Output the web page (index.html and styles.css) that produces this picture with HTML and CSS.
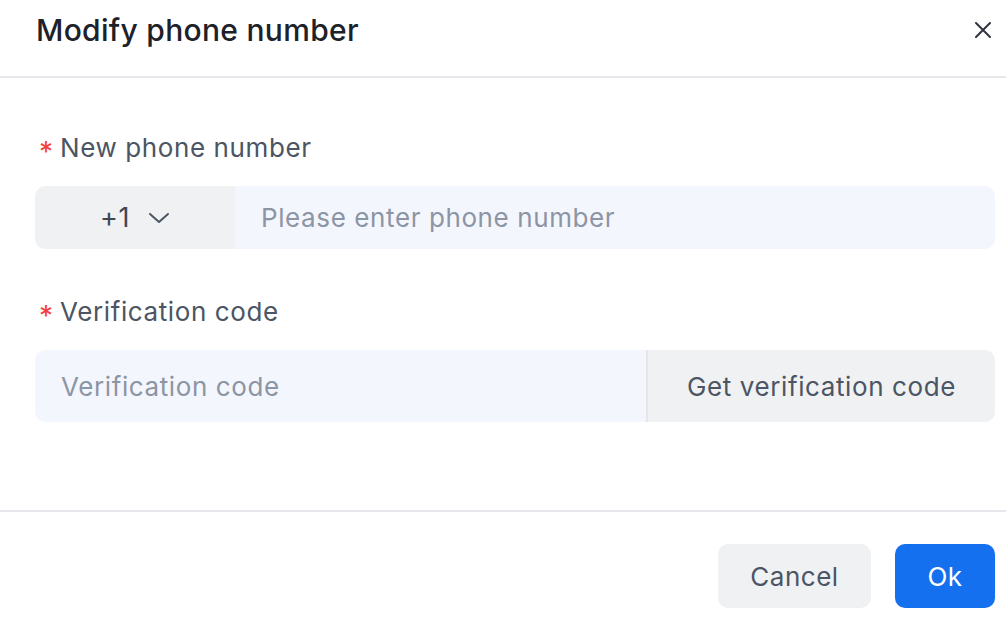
FILE: index.html
```html
<!DOCTYPE html>
<html lang="en">
<head>
<meta charset="utf-8">
<title>Modify phone number</title>
<link rel="stylesheet" href="styles.css">
</head>
<body>
<div class="dialog">
  <div class="header">
    <div class="title">Modify phone number</div>
    <button class="close" aria-label="Close">
      <svg width="16" height="16" viewBox="0 0 16 16"><path d="M1 1L15 15M15 1L1 15" stroke="#2f3540" stroke-width="2" stroke-linecap="round" fill="none"/></svg>
    </button>
  </div>
  <div class="body">
    <div class="field">
      <label class="label"><span class="req">*</span>New phone number</label>
      <div class="group phone">
        <div class="select">
          <span>+1</span>
          <svg width="22" height="12" viewBox="0 0 22 12"><path d="M2 2L11 10L20 2" stroke="#4b5563" stroke-width="2" fill="none" stroke-linecap="round" stroke-linejoin="round"/></svg>
        </div>
        <div class="input">Please enter phone number</div>
      </div>
    </div>
    <div class="field second">
      <label class="label"><span class="req">*</span>Verification code</label>
      <div class="group code">
        <div class="input">Verification code</div>
        <div class="getcode">Get verification code</div>
      </div>
    </div>
  </div>
  <div class="footer">
    <button class="btn cancel">Cancel</button>
    <button class="btn ok">Ok</button>
  </div>
</div>
</body>
</html>
```
FILE: styles.css
```css
* { box-sizing: border-box; }
html, body { margin: 0; padding: 0; background: #fff; }
body { font-family: Inter, "Noto Sans", sans-serif; width: 1006px; height: 628px; overflow: hidden; }
.dialog { display: flex; flex-direction: column; height: 628px; }
.header {
  height: 78px;
  border-bottom: 2px solid #e6e7eb;
  display: flex;
  justify-content: space-between;
  align-items: flex-start;
  padding: 10px 14px 0 36px;
}
.title { font-size: 30px; line-height: 40px; color: #1d2129; font-weight: 500; letter-spacing: 0.3px; }
.close { background: none; border: 0; padding: 0; margin-top: 11px; width: 18px; height: 18px; display: flex; align-items: center; justify-content: center; }
.body { height: 434px; padding: 52px 11px 0 35px; border-bottom: 2px solid #e6e7eb; }
.label { display: flex; align-items: center; font-size: 26px; line-height: 36px; color: #4b5563; padding-left: 4px; letter-spacing: 0.6px; }
.req { color: #f53f3f; font-size: 28px; margin-right: 7px; position: relative; top: 4px; letter-spacing: 0; }
.field .group { margin-top: 20px; display: flex; border-radius: 10px; overflow: hidden; }
.second { margin-top: 45px; }
.phone { height: 63px; }
.code { height: 72px; }
.select { width: 200px; background: #f0f1f3; display: flex; align-items: center; justify-content: center; gap: 18px; font-size: 27px; color: #3f4654; padding-left: 0; letter-spacing: 0.6px; }
.input { flex: 1; background: #f3f6fd; display: flex; align-items: center; padding-left: 26px; font-size: 26px; color: #8c95a3; letter-spacing: 0.6px; }
.getcode { width: 349px; background: #f0f1f3; border-left: 2px solid #e4e6ea; display: flex; align-items: center; justify-content: center; font-size: 26px; color: #4b5563; letter-spacing: 0.6px; }
.footer { flex: 1; display: flex; justify-content: flex-end; align-items: flex-start; gap: 24px; padding: 32px 11px 0 0; }
.btn { height: 64px; border: 0; border-radius: 10px; font-family: inherit; font-size: 26px; letter-spacing: 0.5px; }
.cancel { width: 153px; background: #f0f1f3; color: #4b5563; }
.ok { width: 100px; background: #1570ef; color: #fff; }
```
